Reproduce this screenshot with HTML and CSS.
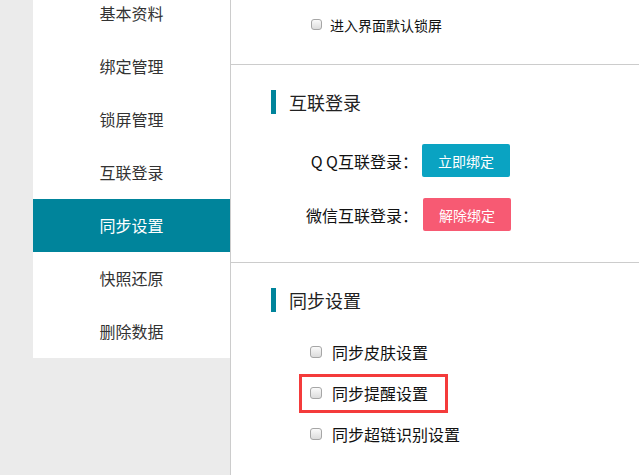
FILE: index.html
```html
<!DOCTYPE html>
<html lang="zh-CN">
<head>
  <meta charset="UTF-8" />
  <title>同步设置</title>
  <link rel="stylesheet" href="styles.css">
</head>
<body>
  <div class="page">
    <div class="gutter"></div>

    <!-- left menu -->
    <aside class="sidebar">
      <ul class="menu">
        <li>基本资料</li>
        <li>绑定管理</li>
        <li>锁屏管理</li>
        <li>互联登录</li>
        <li class="active">同步设置</li>
        <li>快照还原</li>
        <li>删除数据</li>
      </ul>
    </aside>

    <main class="content">
      <section class="block block-top">
        <label class="check check-small"><input type="checkbox"><span>进入界面默认锁屏</span></label>
      </section>

      <section class="block block-bind">
        <h2 class="block-title">互联登录</h2>
        <div class="bind-row">
          <span class="bind-label">Q Q互联登录：</span>
          <button class="btn btn-blue">立即绑定</button>
        </div>
        <div class="bind-row">
          <span class="bind-label">微信互联登录：</span>
          <button class="btn btn-red">解除绑定</button>
        </div>
      </section>

      <section class="block block-sync">
        <h2 class="block-title">同步设置</h2>
        <ul class="check-list">
          <li><label class="check"><input type="checkbox"><span>同步皮肤设置</span></label></li>
          <li class="marked"><label class="check"><input type="checkbox"><span>同步提醒设置</span></label></li>
          <li><label class="check"><input type="checkbox"><span>同步超链识别设置</span></label></li>
        </ul>
      </section>
    </main>
  </div>
</body>
</html>
```

FILE: styles.css
```css
* {
  box-sizing: border-box;
  margin: 0;
  padding: 0;
}

body {
  font-family: "Noto Sans CJK SC", "Liberation Sans", sans-serif;
  background: #ebebeb;
  color: #333;
  overflow: hidden;
}

.page {
  display: flex;
  height: 475px;
}

.gutter {
  width: 33px;
  flex-shrink: 0;
}

/* sidebar */
.sidebar {
  width: 197px;
  flex-shrink: 0;
}

.menu {
  list-style: none;
  background: #fff;
  margin-top: -13px;
}

.menu li {
  height: 53px;
  line-height: 53px;
  text-align: center;
  font-size: 16px;
  color: #333;
}

.menu li.active {
  background: #00849b;
  color: #fff;
}

/* main content */
.content {
  flex: 1;
  background: #fff;
  border-left: 1px solid #ccc;
}

.block {
  border-bottom: 1px solid #ccc;
  padding-left: 40px;
}

.block-top {
  height: 65px;
  padding-top: 11px;
  padding-left: 80px;
}

.block-bind {
  height: 198px;
  padding-top: 25px;
}

.block-sync {
  border-bottom: none;
  padding-top: 25px;
}

.block-title {
  font-size: 18px;
  font-weight: normal;
  color: #222;
  height: 24px;
  line-height: 24px;
  border-left: 5px solid #00849b;
  padding-left: 13px;
}

.bind-row {
  display: flex;
  align-items: center;
  margin-top: 30px;
}

.bind-row + .bind-row {
  margin-top: 21px;
}

.bind-label {
  width: 147px;
  text-align: right;
  font-size: 16px;
  color: #111;
}

.btn {
  margin-left: 4px;
  width: 88px;
  height: 33px;
  border: none;
  border-radius: 2px;
  color: #fff;
  font-family: inherit;
  font-size: 14px;
}

.btn-blue {
  background: #0aa3c2;
}

.btn-red {
  background: #f75a73;
  margin-left: 5px;
}

/* checkboxes */
.check {
  display: inline-flex;
  align-items: center;
  font-size: 16px;
  line-height: 20px;
  color: #111;
  position: relative;
}

.check-small {
  font-size: 14px;
}

.check input {
  appearance: none;
  -webkit-appearance: none;
  width: 12px;
  height: 12px;
  margin-right: 10px;
  border: 1px solid #a6a6a6;
  border-radius: 3px;
  background: linear-gradient(#fafafa, #dcdcdc);
}

.check-small input {
  width: 11px;
  height: 11px;
  margin-right: 8px;
}

.check-list {
  list-style: none;
  margin-top: 19px;
  padding-left: 39px;
}

.check-list li {
  height: 41px;
  display: flex;
  align-items: center;
}

/* red annotation box drawn over the marked row */
.marked .check::after {
  content: "";
  position: absolute;
  left: -11px;
  right: -20px;
  top: -9px;
  bottom: -10px;
  border: 3px solid #f43b3b;
}
```
